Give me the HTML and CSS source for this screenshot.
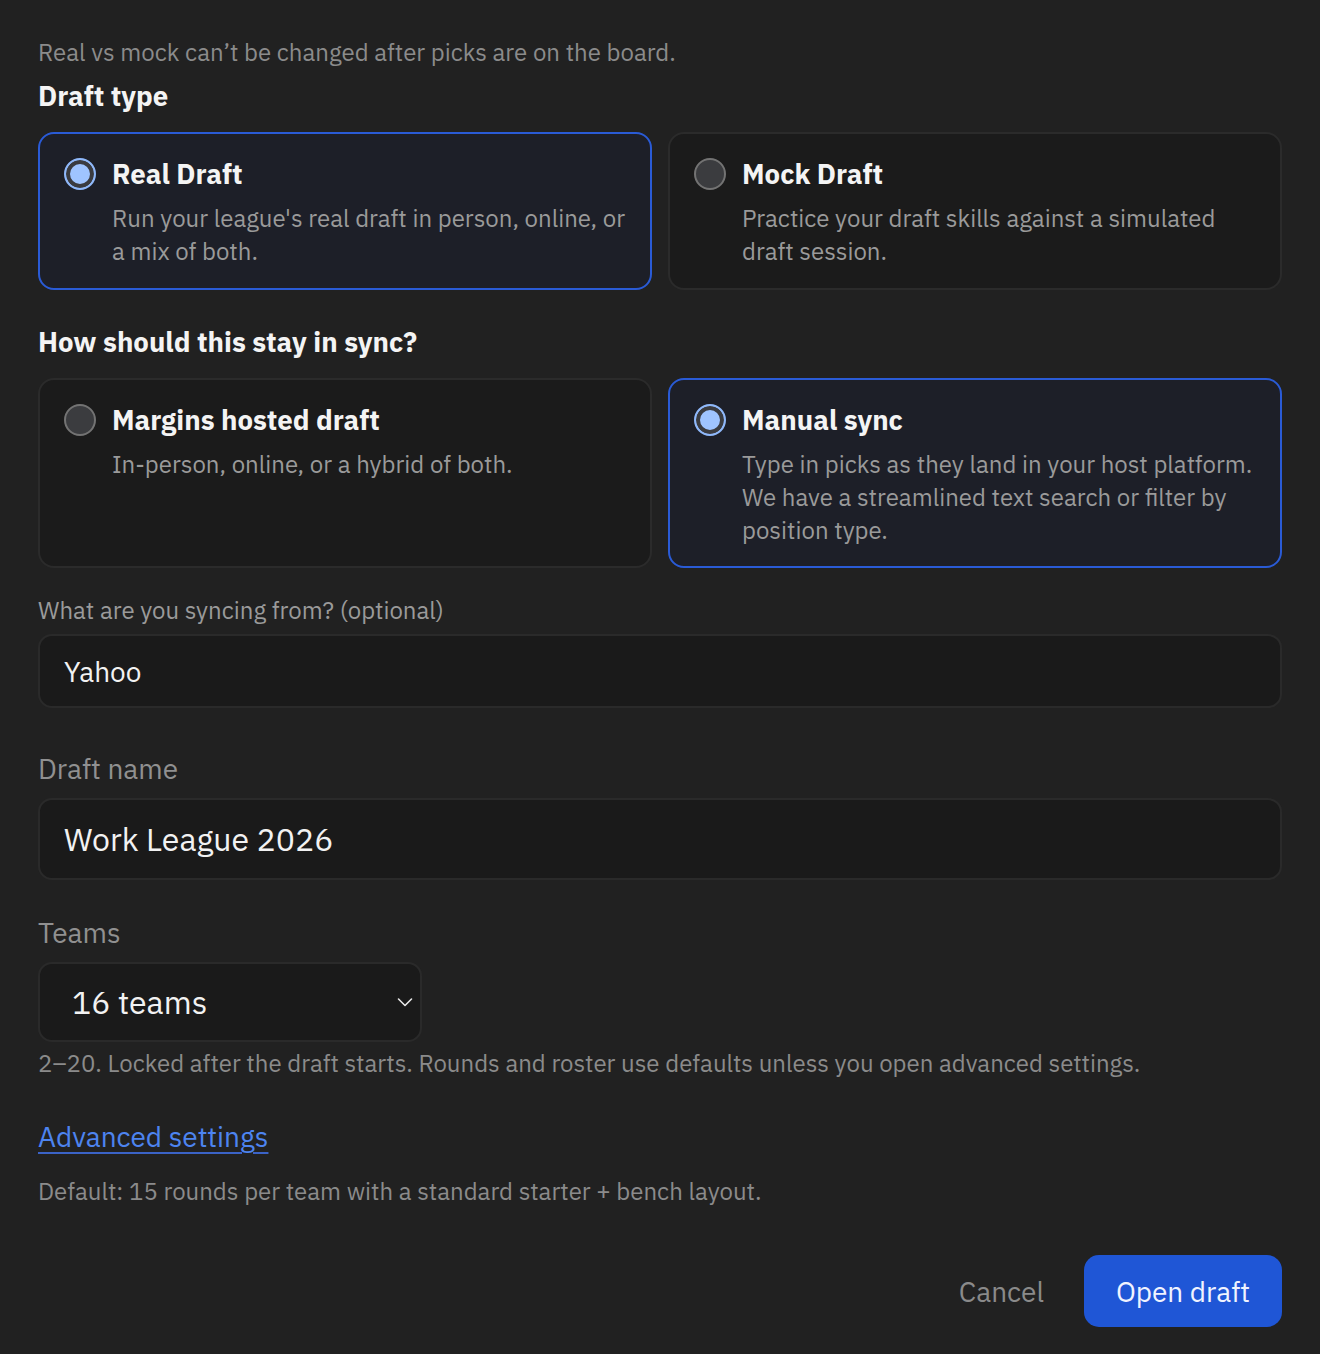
FILE: index.html
```html
<!DOCTYPE html>
<html lang="en">
<head>
<meta charset="utf-8">
<title>Draft setup</title>
<link rel="stylesheet" href="styles.css">
</head>
<body>
<main class="form">
  <p class="hint top-hint">Real vs mock can’t be changed after picks are on the board.</p>
  <h2 class="section-title">Draft type</h2>
  <div class="options">
    <label class="option selected">
      <span class="radio on"></span>
      <span class="option-body">
        <span class="option-title">Real Draft</span>
        <span class="option-desc">Run your league's real draft in person, online, or a mix of both.</span>
      </span>
    </label>
    <label class="option">
      <span class="radio"></span>
      <span class="option-body">
        <span class="option-title">Mock Draft</span>
        <span class="option-desc">Practice your draft skills against a simulated draft session.</span>
      </span>
    </label>
  </div>

  <h2 class="section-title sync-title">How should this stay in sync?</h2>
  <div class="options">
    <label class="option">
      <span class="radio"></span>
      <span class="option-body">
        <span class="option-title">Margins hosted draft</span>
        <span class="option-desc">In-person, online, or a hybrid of both.</span>
      </span>
    </label>
    <label class="option selected">
      <span class="radio on"></span>
      <span class="option-body">
        <span class="option-title">Manual sync</span>
        <span class="option-desc">Type in picks as they land in your host platform. We have a streamlined text search or filter by position type.</span>
      </span>
    </label>
  </div>

  <div class="field sync-field">
    <div class="small-label">What are you syncing from? (optional)</div>
    <div class="input small-input">Yahoo</div>
  </div>

  <div class="field name-field">
    <div class="label">Draft name</div>
    <div class="input big-input">Work League 2026</div>
  </div>

  <div class="field teams-field">
    <div class="label">Teams</div>
    <div class="select">
      <span>16 teams</span>
      <svg class="chev" width="18" height="18" viewBox="0 0 18 18" fill="none"><path d="M2.5 6 L9 12.5 L15.5 6" stroke="#e8e8e8" stroke-width="1.6" stroke-linecap="round" stroke-linejoin="round"/></svg>
    </div>
    <p class="hint teams-hint">2–20. Locked after the draft starts. Rounds and roster use defaults unless you open advanced settings.</p>
  </div>

  <a class="adv-link" href="#">Advanced settings</a>
  <p class="hint default-hint">Default: 15 rounds per team with a standard starter + bench layout.</p>

  <div class="actions">
    <button class="btn-cancel" type="button">Cancel</button>
    <button class="btn-primary" type="button">Open draft</button>
  </div>
</main>
</body>
</html>
```
FILE: styles.css
```css
* { box-sizing: border-box; }
html, body { margin: 0; padding: 0; }
body {
  background: #212121;
  color: #ececec;
  font-family: "IBM Plex Sans", Inter, "Liberation Sans", sans-serif;
  width: 1320px;
  min-height: 1354px;
}
.form {
  padding: 37px 38px 0 38px;
  display: flex;
  flex-direction: column;
}
.hint {
  margin: 0;
  color: #8b8b8b;
  font-size: 24px;
  line-height: 30px;
}
.section-title {
  margin: 12px 0 0 0;
  font-size: 27.6px;
  line-height: 34px;
  font-weight: 700;
  color: #f4f4f4;
}
.sync-title { margin-top: 35px; }
.options {
  display: grid;
  grid-template-columns: 1fr 1fr;
  gap: 16px;
  margin-top: 19px;
}
.option {
  display: flex;
  gap: 16px;
  align-items: flex-start;
  background: #1b1b1b;
  border: 2px solid #2b2b2b;
  border-radius: 16px;
  padding: 23px 24px 19px 24px;
  min-height: 158px;
}
.option.selected {
  background: #1d1f28;
  border-color: #2a5bd6;
}
.radio {
  flex: none;
  width: 32px;
  height: 32px;
  border-radius: 50%;
  border: 2px solid #737373;
  background: #3b3c3f;
  margin-top: 1px;
}
.radio.on {
  border: 2px solid #8fb8fa;
  background: #9fc4ff;
  box-shadow: inset 0 0 0 4px #3a3b40;
}
.option-body {
  display: flex;
  flex-direction: column;
}
.option-title {
  font-size: 27.6px;
  line-height: 34px;
  font-weight: 700;
  color: #f4f4f4;
}
.option-desc {
  margin-top: 11px;
  font-size: 24px;
  line-height: 33px;
  color: #9a9a9a;
}
.sync-field { margin-top: 27px; }
.small-label {
  font-size: 24px;
  line-height: 30px;
  color: #9a9a9a;
}
.input {
  background: #1a1a1a;
  border: 2px solid #2a2a2a;
  border-radius: 14px;
  color: #f2f2f2;
  display: flex;
  align-items: center;
  padding: 0 24px;
}
.small-input {
  margin-top: 9px;
  height: 74px;
  font-size: 28px;
}
.name-field { margin-top: 44px; }
.label {
  font-size: 28px;
  line-height: 34px;
  color: #909090;
}
.big-input {
  margin-top: 12px;
  height: 82px;
  font-size: 32px;
}
.teams-field { margin-top: 36px; }
.select {
  margin-top: 12px;
  width: 384px;
  height: 80px;
  background: #1a1a1a;
  border: 2px solid #2a2a2a;
  border-radius: 14px;
  display: flex;
  align-items: center;
  justify-content: space-between;
  padding: 0 6px 0 32px;
  font-size: 32px;
  color: #f2f2f2;
}
.teams-hint { margin-top: 6px; }
.adv-link {
  margin-top: 42px;
  align-self: flex-start;
  font-size: 28px;
  line-height: 34px;
  color: #4d84f0;
  text-decoration: underline;
  text-decoration-color: #3b63c7;
  text-underline-offset: 5px;
  text-decoration-thickness: 2px;
}
.default-hint { margin-top: 22px; }
.actions {
  display: flex;
  justify-content: flex-end;
  align-items: center;
  gap: 40px;
  margin-top: 49px;
}
.btn-cancel {
  background: none;
  border: none;
  color: #8a8a8a;
  font: inherit;
  font-size: 28px;
  padding: 0;
}
.btn-primary {
  background: #1f56d6;
  border: none;
  border-radius: 15px;
  color: #f0f3ff;
  font: inherit;
  font-size: 28px;
  width: 198px;
  height: 72px;
}
```
